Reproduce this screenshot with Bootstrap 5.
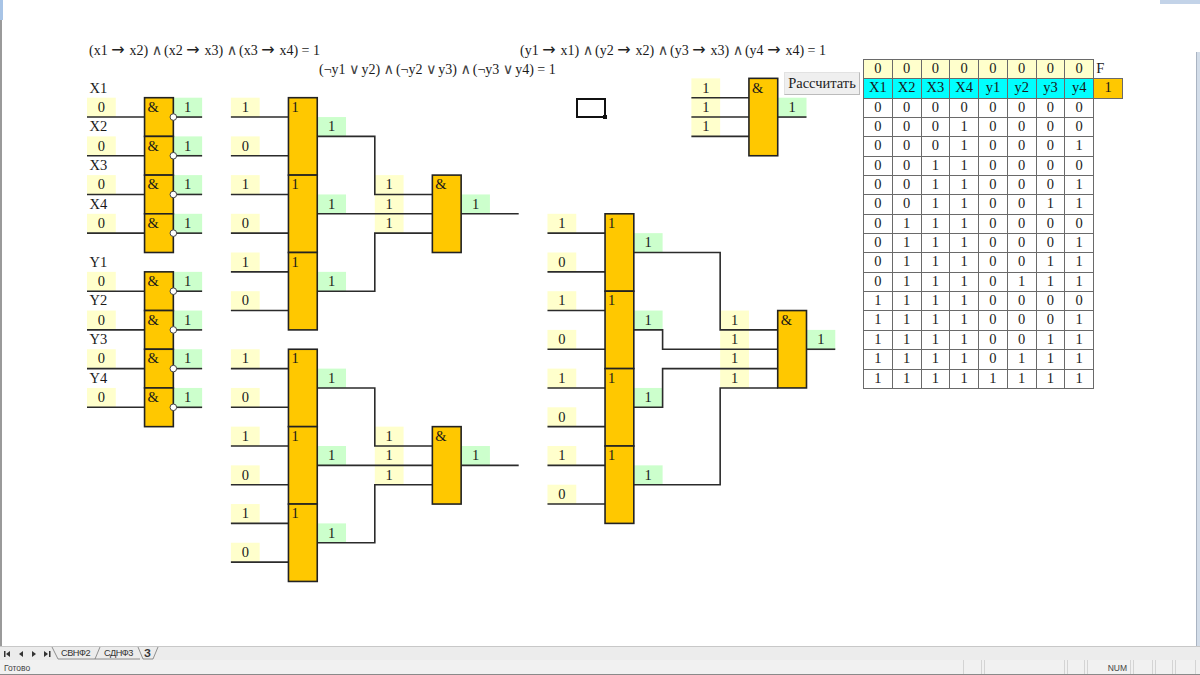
<!DOCTYPE html>
<html lang="ru">
<head>
<meta charset="utf-8">
<title>Логические схемы</title>
<link rel="stylesheet" href="https://cdn.jsdelivr.net/npm/bootstrap@5.3.0/dist/css/bootstrap.min.css">
<style>
html,body{height:675px;overflow:hidden;background:#fff}
.xl-app{height:675px;width:1200px;font-family:"Liberation Serif",serif;color:#111}
.xl-sheet{height:646px;padding:59px 0 0 861px;border-left:2px solid #9a9a9a}
.xl-svg{left:-2px;top:0}
.xl-svg text{font-family:"Liberation Serif",serif;font-size:14.5px;fill:#1a1a1a;text-anchor:middle}
.xl-svg text.formula{font-size:14px;text-anchor:start}
.xl-svg text.gl{text-anchor:start}
.xl-svg tspan.sym{font-family:"DejaVu Sans",sans-serif;font-size:14.5px;letter-spacing:-1.8px;fill:#444}
.xl-svg tspan.arr{font-family:"DejaVu Sans",sans-serif;font-size:16px;letter-spacing:1.4px;fill:#222}
.xl-svg .wire{stroke:#2b2b2b;stroke-width:1.6;fill:none}
.xl-svg .gate{stroke:#222;stroke-width:1.6;fill:#ffc800}
.xl-table{width:auto;table-layout:fixed;border-collapse:collapse;margin:0;font-size:14.5px;position:relative}
.xl-table td{width:28.78px;height:19.35px;padding:0;line-height:17px;text-align:center;border:1px solid #6a6a6a;background:#fff;color:#1a1a1a}
.xl-table tr{height:19.35px}
.xl-table td.cy{background:#ffffcc}
.xl-table td.cc{background:#00ffff}
.xl-table td.co{background:#ffc800}
.xl-table td.cf{border:0;border-left:1px solid #6a6a6a;background:transparent;text-align:left;padding-left:2px}
.xl-calc{left:782px;top:72px;width:76px;height:23px;padding:0;font-size:14.5px;line-height:21px;background:#efefef;border:1px solid #e2e2e2;border-right-color:#bbb;border-bottom-color:#bbb;border-radius:0;color:#222;font-family:"Liberation Serif",serif}
.xl-sel{left:574px;top:98px;width:30px;height:20px;border:2px solid #111}
.xl-sel::after{content:"";position:absolute;right:-3px;bottom:-3px;width:4px;height:4px;background:#111}
.xl-tl{left:0;top:0;width:3px;height:20px;background:#a8c4e6}
.xl-tr{right:0;top:0;width:40px;height:4px;background:#c3d3e8}
.xl-re{right:0;top:52px;width:4px;height:594px;background:#d3dde9;border-left:1px solid #aab4c2}
.xl-tabs{height:14px;background:#ececec;border-top:1px solid #c8c8c8;font-family:"Liberation Sans",sans-serif;font-size:9.2px;line-height:13px;color:#333}
.xl-navs{width:61px;padding-left:4px;gap:5px}
.xl-navs svg{display:block}
.xl-tab1{width:43px;letter-spacing:-.5px}
.xl-tab2{width:40px;letter-spacing:-.5px}
.xl-tab3{font-weight:700;font-size:11px}
.xl-tabsvg{left:0;top:0}
.xl-status{height:14px;background:#f1f1f1;font-family:"Liberation Sans",sans-serif;font-size:8.5px;line-height:17px;color:#444;padding-left:4px}
.xl-pane{height:14px;border-left:1px solid #d4d4d4;border-right:1px solid #d4d4d4;margin-left:2px;text-align:center}
.xl-foot{height:1px;background:#8a8a8a}
</style>
</head>
<body>
<div class="xl-app d-flex flex-column position-relative">
  <div class="xl-sheet position-relative">
    <svg id="dia" class="xl-svg position-absolute" width="1200" height="646" viewBox="0 0 1200 646" xmlns="http://www.w3.org/2000/svg"></svg>
    <table class="table xl-table"><tbody id="tb"></tbody></table>
    <button type="button" class="btn xl-calc position-absolute">Рассчитать</button>
    <div class="xl-sel position-absolute"></div>
  </div>
  <div class="xl-tl position-absolute"></div>
  <div class="xl-tr position-absolute"></div>
  <div class="xl-re position-absolute"></div>
  <div class="xl-tabs d-flex align-items-center position-relative">
    <div class="xl-navs d-flex align-items-center">
      <svg width="8" height="8" viewBox="0 0 8 8"><rect x="0" y="1" width="1.5" height="6" fill="#333"/><path d="M6 1v6L2 4z" fill="#333"/></svg>
      <svg width="8" height="8" viewBox="0 0 8 8"><path d="M6 1v6L2 4z" fill="#333"/></svg>
      <svg width="8" height="8" viewBox="0 0 8 8"><path d="M2 1v6l4-3z" fill="#333"/></svg>
      <svg width="8" height="8" viewBox="0 0 8 8"><path d="M1 1v6l4-3z" fill="#333"/><rect x="6" y="1" width="1.5" height="6" fill="#333"/></svg>
    </div>
    <svg class="xl-tabsvg position-absolute" width="170" height="14" viewBox="0 0 170 14">
      <path d="M52 0l6 12h37l5-12M95 12h45M138 0l5 12h10l5-12" fill="none" stroke="#777" stroke-width=".8"/>
    </svg>
    <div class="xl-tab1">СВНФ2</div>
    <div class="xl-tab2">СДНФ3</div>
    <div class="xl-tab3">З</div>
  </div>
  <div class="xl-status d-flex">
    <div class="me-auto">Готово</div>
    <div class="xl-pane" style="width:19px"></div>
    <div class="xl-pane" style="width:81px"></div>
    <div class="xl-pane" style="width:18px"></div>
    <div class="xl-pane" style="width:44px;text-align:right;padding-right:3px">NUM</div>
    <div class="xl-pane" style="width:20px"></div>
    <div class="xl-pane" style="width:18px"></div>
    <div class="xl-pane me-1" style="width:21px"></div>
  </div>
  <div class="xl-foot"></div>
</div>
<script>
const X=n=>87+28.78*n, Y=k=>59+19.35*k;
let s='';
const cell=(n,k,fill,t)=>{s+=`<rect x="${X(n)}" y="${Y(k)}" width="28.78" height="19.35" fill="${fill}"/><text x="${X(n)+14.4}" y="${Y(k)+14.2}">${t}</text>`};
const yel=(n,k,t)=>cell(n,k,'#ffffcc',t), grn=(n,k,t)=>cell(n,k,'#ccffcc',t);
let wires=[],gates=[],dots=[];
const W=p=>wires.push(p);
const L=(x1,y1,x2,y2)=>W(`M${x1} ${y1}L${x2} ${y2}`);
const G=(n,k1,k2,t)=>gates.push([n,k1,k2,t]);
[[0,1,['X1','X2','X3','X4']],[0,10,['Y1','Y2','Y3','Y4']]].forEach(([n,k0,names])=>{
  names.forEach((nm,i)=>{
    const k=k0+2*i;
    s+=`<text class="gl" x="${X(n)+2.5}" y="${Y(k)+14.2}">${nm}</text>`;
    yel(n,k+1,'0'); grn(n+3,k+1,'1');
    L(X(n),Y(k+2),X(n+2),Y(k+2)); L(X(n+3),Y(k+2),X(n+4),Y(k+2));
    G(n+2,k+1,k+3,'&amp;'); dots.push([X(n+3),Y(k+2)]);
  });
});
function block(dk){
  [1,0,1,0,1,0].forEach((v,i)=>{const k=2+2*i+dk; yel(5,k,v); L(X(5),Y(k+1),X(7),Y(k+1));});
  [0,1,2].forEach(i=>G(7,2+4*i+dk,6+4*i+dk,'1'));
  grn(8,3+dk,1);grn(8,7+dk,1);grn(8,11+dk,1);
  [6,7,8].forEach(k=>yel(10,k+dk,1));
  W(`M${X(8)} ${Y(4+dk)}H${X(10)}V${Y(7+dk)}H${X(12)}`);
  L(X(8),Y(8+dk),X(12),Y(8+dk));
  W(`M${X(8)} ${Y(12+dk)}H${X(10)}V${Y(9+dk)}H${X(12)}`);
  G(12,6+dk,10+dk,'&amp;');
  grn(13,7+dk,1); L(X(13),Y(8+dk),X(15),Y(8+dk));
}
block(0);block(13);
[1,0,1,0,1,0,1,0].forEach((v,i)=>{const k=8+2*i; yel(16,k,v); L(X(16),Y(k+1),X(18),Y(k+1));});
[0,1,2,3].forEach(i=>G(18,8+4*i,12+4*i,'1'));
[9,13,17,21].forEach(k=>grn(19,k,1));
[13,14,15,16].forEach(k=>yel(22,k,1));
W(`M${X(19)} ${Y(10)}H${X(22)}V${Y(14)}H${X(24)}`);
W(`M${X(19)} ${Y(14)}H${X(20)}V${Y(15)}H${X(24)}`);
W(`M${X(19)} ${Y(18)}H${X(20)}V${Y(16)}H${X(24)}`);
W(`M${X(19)} ${Y(22)}H${X(22)}V${Y(17)}H${X(24)}`);
G(24,13,17,'&amp;'); grn(25,14,1); L(X(25),Y(15),X(26),Y(15));
[1,2,3].forEach(k=>{yel(21,k,1);L(X(21),Y(k+1),X(23),Y(k+1));});
G(23,1,5,'&amp;'); grn(24,2,1); L(X(24),Y(3),X(25),Y(3));
let w=wires.map(d=>`<path class="wire" d="${d}"/>`).join('');
let g=gates.map(([n,a,b,t])=>`<rect class="gate" x="${X(n)}" y="${Y(a)}" width="28.78" height="${Y(b)-Y(a)}"/><text class="gl" x="${X(n)+3}" y="${Y(a)+14.2}">${t}</text>`).join('');
let d=dots.map(([x,y])=>`<circle cx="${x}" cy="${y}" r="3.3" fill="#fff" stroke="#444" stroke-width="1"/>`).join('');
const sym=t=>t.replace(/→/g,'<tspan class="arr">→</tspan>').replace(/[∧∨]/g,m=>`<tspan class="sym">${m}</tspan>`);
let f=[[89,55,'(x1 → x2) ∧ (x2 → x3) ∧ (x3 → x4) = 1'],[520,55,'(y1 → x1) ∧ (y2 → x2) ∧ (y3 → x3) ∧ (y4 → x4) = 1'],[319,74,'(¬y1 ∨ y2) ∧ (¬y2 ∨ y3) ∧ (¬y3 ∨ y4) = 1']]
 .map(([x,y,t])=>`<text class="formula" x="${x}" y="${y}">${sym(t)}</text>`).join('');
document.getElementById('dia').innerHTML=s+w+g+d+f;
const rows=["00000000","00010000","00010001","00110000","00110001","00110011","01110000","01110001","01110011","01110111","11110000","11110001","11110011","11110111","11111111"];
let h='<tr>'+'00000000'.split('').map(c=>`<td class="cy">${c}</td>`).join('')+'<td class="cf">F</td></tr>';
h+='<tr>'+['X1','X2','X3','X4','y1','y2','y3','y4'].map(c=>`<td class="cc">${c}</td>`).join('')+'<td class="co">1</td></tr>';
rows.forEach(r=>{h+='<tr>'+r.split('').map(c=>`<td>${c}</td>`).join('')+'<td class="cf"></td></tr>'});
document.getElementById('tb').innerHTML=h;
</script>
<script src="https://cdn.jsdelivr.net/npm/bootstrap@5.3.0/dist/js/bootstrap.bundle.min.js"></script>
</body>
</html>
